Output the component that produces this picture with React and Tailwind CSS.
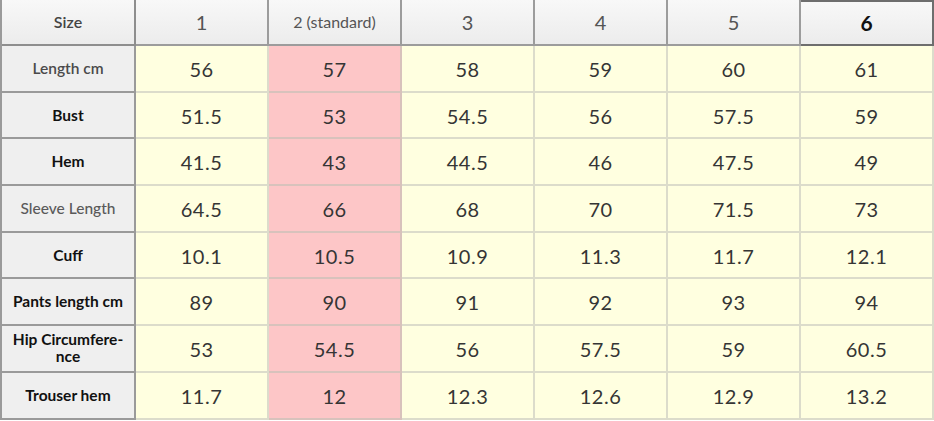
import React from "react";

const headers = ["1", "2 (standard)", "3", "4", "5", "6"];

const rows = [
  { label: "Length cm", style: "font-semibold text-[#4a4a4a]", values: ["56", "57", "58", "59", "60", "61"] },
  { label: "Bust", style: "font-bold text-[#111]", values: ["51.5", "53", "54.5", "56", "57.5", "59"] },
  { label: "Hem", style: "font-bold text-[#111]", values: ["41.5", "43", "44.5", "46", "47.5", "49"] },
  { label: "Sleeve Length", style: "font-medium text-[#5a5a5a]", values: ["64.5", "66", "68", "70", "71.5", "73"] },
  { label: "Cuff", style: "font-bold text-[#111]", values: ["10.1", "10.5", "10.9", "11.3", "11.7", "12.1"] },
  { label: "Pants length cm", style: "font-bold text-[#111]", values: ["89", "90", "91", "92", "93", "94"] },
  { label: "Hip Circumfere-\nnce", style: "font-bold text-[#111]", values: ["53", "54.5", "56", "57.5", "59", "60.5"] },
  { label: "Trouser hem", style: "font-bold text-[#111]", values: ["11.7", "12", "12.3", "12.6", "12.9", "13.2"] },
];

const App = () => {
  return (
    <div
      className="w-[934px] h-[421px] overflow-hidden bg-white"
      style={{ fontFamily: "Lato, 'Open Sans', sans-serif" }}
    >
      <div className="grid grid-cols-[134px_repeat(6,133px)] grid-rows-[46px_repeat(8,46.7px)] border-l-[2px] border-[#9a9a9a] w-[934px]">
        {/* header row */}
        <div className="flex items-center justify-center bg-gradient-to-b from-[#f8f8f8] to-[#ececec] border-r-2 border-b-2 border-[#8e8e8e] text-[16px] font-semibold text-[#444]">
          Size
        </div>
        {headers.map((h, i) => (
          <div
            key={h}
            className={
              "flex items-center justify-center bg-gradient-to-b from-[#f8f8f8] to-[#ececec] border-r-2 border-b-2 " +
              (i === 5
                ? "border-[#6e6e6e] border-t-2 text-[21px] font-bold text-[#111]"
                : "border-[#9c9c9c] " +
                  (i === 1 ? "text-[16px] text-[#555]" : "text-[20px] text-[#555]"))
            }
          >
            {h}
          </div>
        ))}

        {/* body */}
        {rows.map((r) => (
          <React.Fragment key={r.label}>
            <div
              className={
                "flex items-center justify-center text-center leading-[17px] whitespace-pre-line bg-[#efefef] border-r-2 border-b-2 border-[#9a9a9a] text-[15.5px] " +
                r.style
              }
            >
              {r.label}
            </div>
            {r.values.map((v, i) => (
              <div
                key={i}
                className={
                  "flex items-center justify-center pt-[1px] text-[20px] tracking-[0.5px] text-[#353535] border-r-2 border-b-2 " +
                  (i === 1
                    ? "bg-[#fdc6c7] border-[#d8c2bc]"
                    : "bg-[#ffffe0] border-[#dcdccb]")
                }
              >
                {v}
              </div>
            ))}
          </React.Fragment>
        ))}
      </div>
    </div>
  );
};

export default App;
